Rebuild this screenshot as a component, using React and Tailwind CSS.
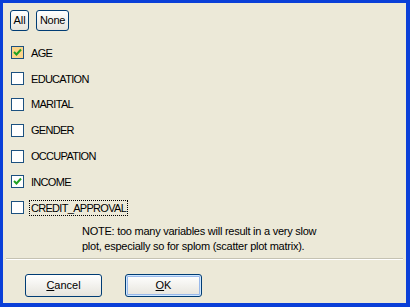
import React from "react";

const vars = [
  { name: "AGE", checked: true },
  { name: "EDUCATION", checked: false },
  { name: "MARITAL", checked: false },
  { name: "GENDER", checked: false },
  { name: "OCCUPATION", checked: false },
  { name: "INCOME", checked: true },
  { name: "CREDIT_APPROVAL", checked: false, focus: true },
];

function Check({ checked, hot }) {
  return (
    <div
      className={`w-[13px] h-[13px] border border-[#1c5180] flex items-center justify-center ${
        hot ? "bg-[#fcd58a]" : "bg-white"
      }`}
    >
      {checked && (
        <svg width="9" height="9" viewBox="0 0 9 9">
          <path d="M1 4 L3.5 6.5 L8 1.5" stroke="#21a121" strokeWidth="2" fill="none" />
        </svg>
      )}
    </div>
  );
}

function XpButton({ children, className = "" }) {
  return (
    <div
      className={`border border-[#003c74] rounded-[3px] bg-gradient-to-b from-white to-[#e6e4dc] flex items-center justify-center text-black ${className}`}
    >
      {children}
    </div>
  );
}

export default function App() {
  return (
    <div
      className="w-[410px] h-[307px] bg-[#0a3fd8] pt-[3px] pl-[3px] pr-[4px] pb-[4px]"
      style={{ fontFamily: '"Liberation Sans", Arial, sans-serif' }}
    >
      <div className="w-full h-full bg-[#ece9d8] flex flex-col text-[11px] text-black">
        <div className="flex gap-[7px] pl-[7px] pt-[7px]">
          <XpButton className="w-[19px] h-[21px]">All</XpButton>
          <XpButton className="w-[33px] h-[21px] tracking-[-0.3px]">None</XpButton>
        </div>
        <div className="flex flex-col pl-[8px] pt-[9px]">
          {vars.map((v, i) => (
            <div key={v.name} className="flex items-center h-[25.8px] gap-[6px]">
              <Check checked={v.checked} hot={i === 0} />
              <span
                className={`px-px leading-[14px] tracking-[-0.7px] ${
                  v.focus ? "outline outline-1 outline-dotted outline-black" : ""
                }`}
              >
                {v.name}
              </span>
            </div>
          ))}
        </div>
        <div className="pl-[79px] pt-[3px] leading-[15px] tracking-[-0.25px]">
          <div>NOTE: too many variables will result in a very slow</div>
          <div>plot, especially so for splom (scatter plot matrix).</div>
        </div>
        <div className="mx-[3px] mt-[4px] border-t border-[#c5c2b2] border-b border-b-white" />
        <div className="flex gap-[23px] pl-[22px] pt-[14px]">
          <XpButton className="w-[77px] h-[23px]">
            <span>
              <u>C</u>ancel
            </span>
          </XpButton>
          <XpButton className="w-[77px] h-[23px] shadow-[inset_0_0_0_1px_#cee7ff,inset_0_0_0_2px_#98b8ea]">
            <span>
              <u>O</u>K
            </span>
          </XpButton>
        </div>
      </div>
    </div>
  );
}
